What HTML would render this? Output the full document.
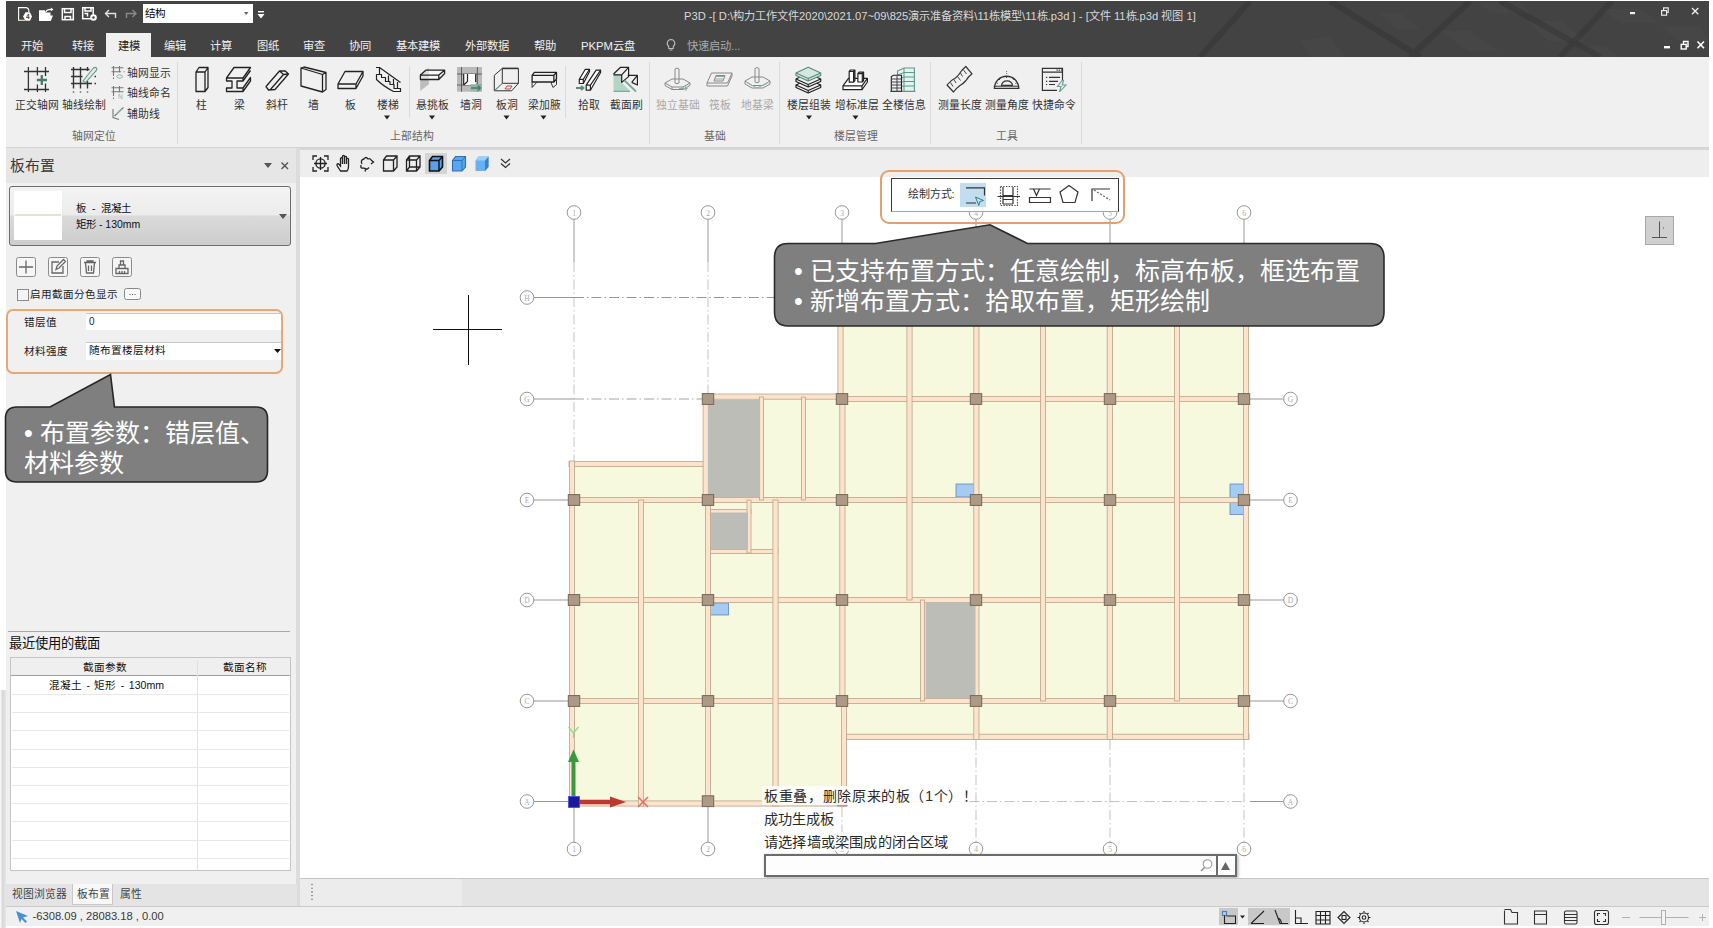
<!DOCTYPE html>
<html lang="zh-CN"><head><meta charset="utf-8">
<style>
*{box-sizing:border-box;margin:0;padding:0}
html,body{width:1713px;height:928px;overflow:hidden;background:#fff;font-family:"Liberation Sans",sans-serif;position:relative}
.a{position:absolute}
.t{position:absolute;white-space:nowrap;line-height:1}
#hdr{left:6px;top:1px;width:1703px;height:56.5px;background:#434343}
#rib{left:6px;top:57px;width:1703px;height:91px;background:#f0f0f0;border-bottom:1px solid #d4d4d4}
.tab{color:#f0f0f0;font-size:11.3px;top:40.8px;font-weight:500}
.rl{font-size:10.8px;color:#333;top:99.5px}
.gl{font-size:10.8px;color:#666;top:131px}
.sep{position:absolute;top:62px;width:1px;height:82px;background:#dadada}
#lp{left:6px;top:148px;width:290px;height:758px;background:#f0f0f0}
#cv{left:300px;top:177px;width:1409px;height:701px;background:#fff}
</style></head><body>
<div id="hdr" class="a"></div>
<svg class="a" style="left:1000px;top:1px" width="709" height="56">
 <g fill="#4a4a4a" opacity="0.55">
  <path d="M528 20 L562 20 L584 40 L548 40 Z"/><path d="M440 30 L470 30 L500 50 L468 50 Z"/>
  <path d="M600 8 L640 8 L660 22 L622 22 Z"/><path d="M660 25 L700 25 L709 40 L680 40 Z"/>
  <path d="M575 45 L605 45 L620 56 L590 56 Z"/><path d="M380 12 L400 12 L420 28 L396 28 Z"/>
  <path d="M300 40 L330 35 L345 56 L310 56 Z"/><path d="M480 2 L520 2 L530 12 L490 12 Z"/>
 </g>
 <g stroke="#333" stroke-width="6" opacity="0.45">
  <path d="M410 56 L470 0"/><path d="M560 56 L612 0"/><path d="M200 56 L250 0"/><path d="M500 0 L600 56"/><path d="M330 0 L420 56"/>
 </g>
</svg>
<!-- quick access -->
<svg class="a" style="left:0;top:0" width="300" height="30">
 <path d="M25 20.2 H18.6 V7.6 H26.5 Q28.5 8 28.8 10 V12" fill="none" stroke="#fff" stroke-width="1.1"/>
 <path d="M25.5 12.2 H30 L32 16.4 L30 20.8 H25.5 L23 16.4 Z" fill="#fff"/>
 <text x="27.8" y="19.3" font-size="6.5" fill="#404040" text-anchor="middle" font-family="Liberation Sans" font-weight="bold">4</text>
 <path d="M39 10.2 H44.8 L45.8 12.5 H50.5 V15.5 H53 L50.8 21 H39 Z" fill="#fff"/>
 <path d="M46 11.8 Q46.5 9.3 51.5 9.3" fill="none" stroke="#fff" stroke-width="1.3"/>
 <path d="M50.8 7.6 L53.5 9.4 L50.8 11.2 Z" fill="#fff"/>
<g fill="none" stroke="#fff" stroke-width="1.5">
  <rect x="62.3" y="8.7" width="11" height="11"/>
  <path d="M64.5 9 V12.5 H71 V9 M65 19.5 V16.5 H70.5 V19.5"/>
  <rect x="82.7" y="7.7" width="10.5" height="11"/>
  <path d="M85 8 V11 H91 V8 M84.5 13.5 H87.5 V16.5"/>
 </g>
 <circle cx="93.5" cy="17.5" r="3.3" fill="#fff"/><circle cx="93.5" cy="17.5" r="1.2" fill="#404040"/>
 <g fill="none" stroke="#e0e0e0" stroke-width="1.4">
  <path d="M109 10 L105.5 13.5 L109 17 M106 13.5 H115.5 V18"/>
 </g>
 <g fill="none" stroke="#8a8a8a" stroke-width="1.4">
  <path d="M132.5 10 L136 13.5 L132.5 17 M135.5 13.5 H126.5 V18"/>
 </g>
</svg>
<div class="a" style="left:143px;top:4px;width:110px;height:19px;background:#fff"></div>
<div class="t" style="left:144.5px;top:8px;font-size:10.5px;color:#000">结构</div>
<svg class="a" style="left:243px;top:11px" width="8" height="6"><path d="M1 1 L5.5 1 L3.25 4 Z" fill="#666"/></svg>
<svg class="a" style="left:256.5px;top:11px" width="8" height="10"><rect x="1" y="0" width="6" height="1.4" fill="#fff"/><path d="M0.5 3 L7.5 3 L4 7.5 Z" fill="#fff"/></svg>
<div class="t" style="left:684px;top:10.5px;font-size:11.2px;color:#d8d8d8;letter-spacing:0">P3D -[ D:\构力工作文件2020\2021.07~09\825演示准备资料\11栋模型\11栋.p3d ] - [文件 11栋.p3d 视图 1]</div>
<svg class="a" style="left:1620px;top:0" width="93" height="58">
 <rect x="10" y="12" width="5" height="2.2" fill="#f0f0f0"/>
 <g fill="none" stroke="#e8e8e8" stroke-width="1.2"><rect x="41.6" y="10.6" width="5" height="4.6"/><path d="M43.6 10.6 V7.8 H48.2 V12.5 H46.6"/></g>
 <path d="M72 8 L78.3 14.2 M78.3 8 L72 14.2" stroke="#f0f0f0" stroke-width="1.3"/>
 <rect x="44" y="46" width="6" height="2.4" fill="#fff"/>
 <g fill="none" stroke="#fff" stroke-width="1.4"><rect x="61.2" y="44.4" width="5" height="4.6"/><path d="M63.5 44.4 V41.5 H68 V46.5 H66.2"/></g>
 <path d="M77.5 41.5 L84 48.3 M84 41.5 L77.5 48.3" stroke="#fff" stroke-width="1.6"/>
</svg>
<!-- tabs -->
<div class="a" style="left:106px;top:33px;width:45px;height:25px;background:#f0f0f0"></div>
<div class="t tab" style="left:21px">开始</div>
<div class="t tab" style="left:71.5px">转接</div>
<div class="t tab" style="left:118px;color:#222">建模</div>
<div class="t tab" style="left:163.5px">编辑</div>
<div class="t tab" style="left:210px">计算</div>
<div class="t tab" style="left:257px">图纸</div>
<div class="t tab" style="left:303px">审查</div>
<div class="t tab" style="left:349px">协同</div>
<div class="t tab" style="left:396px">基本建模</div>
<div class="t tab" style="left:465px">外部数据</div>
<div class="t tab" style="left:534px">帮助</div>
<div class="t tab" style="left:581px">PKPM云盘</div>
<svg class="a" style="left:665px;top:38px" width="12" height="14"><path d="M6 1.5 A3.8 3.8 0 0 1 8.3 8.3 V10.5 H3.7 V8.3 A3.8 3.8 0 0 1 6 1.5 Z M4.5 12 H7.5" fill="none" stroke="#bbb" stroke-width="1.1"/></svg>
<div class="t tab" style="left:687px;color:#aaa">快速启动...</div>
<div id="rib" class="a"></div>
<div class="sep" style="left:177px"></div>
<div class="sep" style="left:409px;top:66px;height:52px"></div>
<div class="sep" style="left:565px;top:66px;height:52px"></div>
<div class="sep" style="left:649px"></div>
<div class="sep" style="left:779px"></div>
<div class="sep" style="left:930px"></div>
<div class="sep" style="left:1081px"></div>
<div class="t rl" style="left:15px">正交轴网</div>
<div class="t rl" style="left:62px">轴线绘制</div>
<div class="t rl" style="left:127px;top:67.5px">轴网显示</div>
<div class="t rl" style="left:127px;top:88px">轴线命名</div>
<div class="t rl" style="left:127px;top:108.5px">辅助线</div>
<div class="t gl" style="left:71.5px">轴网定位</div>
<div class="t rl" style="left:196px">柱</div>
<div class="t rl" style="left:233.5px">梁</div>
<div class="t rl" style="left:265.5px">斜杆</div>
<div class="t rl" style="left:308px">墙</div>
<div class="t rl" style="left:345px">板</div>
<div class="t rl" style="left:376.5px">楼梯</div>
<div class="t rl" style="left:416px">悬挑板</div>
<div class="t rl" style="left:459.5px">墙洞</div>
<div class="t rl" style="left:496px">板洞</div>
<div class="t rl" style="left:528px">梁加腋</div>
<div class="t rl" style="left:577.5px">拾取</div>
<div class="t rl" style="left:610px">截面刷</div>
<div class="t gl" style="left:390px">上部结构</div>
<div class="t rl" style="left:655.5px;color:#a8a8a8">独立基础</div>
<div class="t rl" style="left:709px;color:#a8a8a8">筏板</div>
<div class="t rl" style="left:741px;color:#a8a8a8">地基梁</div>
<div class="t gl" style="left:704px">基础</div>
<div class="t rl" style="left:787px">楼层组装</div>
<div class="t rl" style="left:834.5px">增标准层</div>
<div class="t rl" style="left:882px">全楼信息</div>
<div class="t gl" style="left:834px">楼层管理</div>
<div class="t rl" style="left:938px">测量长度</div>
<div class="t rl" style="left:985px">测量角度</div>
<div class="t rl" style="left:1032px">快捷命令</div>
<div class="t gl" style="left:996px">工具</div>
<svg class="a" style="left:0;top:0" width="1100" height="148">
<g fill="#222">
 <path d="M384 115.5 h6 l-3 4z"/><path d="M429 115.5 h6 l-3 4z"/><path d="M503.5 115.5 h6 l-3 4z"/><path d="M540.5 115.5 h6 l-3 4z"/>
 <path d="M806 115.5 h6 l-3 4z"/><path d="M852.5 115.5 h6 l-3 4z"/>
</g>
<!-- 正交轴网 -->
<g stroke="#333" stroke-width="1.3" fill="none">
 <path d="M24 71.5 H49 M24 89.5 H49 M28.4 67 V92 M37.4 67 V75.5 M37.4 84.5 V92 M45.5 67 V76 M45.5 83.5 V92"/>
</g>
<path d="M41.8 75 V85 M36.8 80 H47" stroke="#4a7a6e" stroke-width="2.3"/>
<!-- 轴线绘制 -->
<g stroke="#333" stroke-width="1.4" fill="none">
 <path d="M71 69.5 H89.5 M71 76.5 H82.5 M71 83.5 H92 M73.5 67 V88.5 M80.5 67 V88.5 M87.5 67 V71 M87.5 81 V88.5"/>
 <path d="M73.5 91.5 V92.5 M80.5 91.5 V92.5 M87.5 91.5 V92.5 M94.5 76.5 H96 M94.5 83.5 H96" stroke-width="1.5"/>
</g>
<path d="M83 81 L93 68.5 Q95 66.5 96.5 68 Q97.5 69.5 95.5 71.5 L85.5 82.5 Z" fill="#e2ede9" stroke="#6a9a8e" stroke-width="1.1"/>
<!-- small icons -->
<g stroke="#777" stroke-width="1.1" fill="none">
 <path d="M111.5 67.8 H123.5 M111.5 71.8 H121 M113.5 66 V76 M119.5 66 V72.5" />
 <path d="M113.5 77.5 V79 M123.5 71.8 H124.5" />
 <path d="M111.5 87.8 H123.5 M111.5 91.8 H123.5 M113.5 86 V96 M119.5 86 V92.5" />
 <path d="M113.5 97.5 V99" />
 <path d="M113 109 V117.5 L119 119.5 M114.5 116 L123.5 107.5"/>
</g>
<path d="M116.5 76.5 Q119.5 73 123 76.5 Q119.5 80 116.5 76.5 Z" fill="none" stroke="#8ab5aa" stroke-width="1"/>
<text x="118" y="99" font-size="6.5" fill="#8ab0a6" font-family="Liberation Sans">N</text>
<path d="M116.5 114 L122 108.5" stroke="#8ab5aa" stroke-width="1.6"/>
<!-- 柱 -->
<g stroke="#222" stroke-width="1.3" fill="none" stroke-linejoin="round">
 <path d="M196 72 L199 67.5 H208 V87.5 L205 91.5 H196 Z M196 72 H205 V91.5 M205 72 L208 67.5"/>
<!-- 梁 -->
 <path d="M226.5 78 L234 67.5 H250.5 L243 78 Z M226.5 78 V81 H232 V88 H226.5 V91.5 H243 V88 H237 V81 H243 V78 M243 81 L250.5 70.5 M243 91.5 L250.5 81 V77.5 L243 88"/>
<!-- 斜杆 -->
 <path d="M266 86.5 L279.5 71 L285 70.8 L288.5 74 L275 89.5 L268.5 90 Z M279.5 71 L283.5 74.5 L270 90 M283.5 74.5 L288.5 74"/>
<!-- 墙 -->
 <path d="M301 68 L322.5 74.5 L326 72.5 V89.5 L322.5 92 L301 86 Z M301 68 L304 67 L326 72.5 M322.5 74.5 V92"/>
<!-- 板 -->
 <path d="M338 84 L345 71.5 H363 L356 84 Z M338 84 V88.5 H356 L363 76 V71.5 M356 84 V88.5"/>
<!-- 楼梯 -->
 <path d="M376 67.5 H379.5 L400.5 82.5 M379.5 67.5 V74 M376.5 74.5 H381.5 V77.5 H385.5 V81.5 H390 V84.5 H394 V88.5 H400.5 V91.5 H393.5 Q383 86 376.5 79.5 Z M388.5 75.5 V81.5 M393.5 79 V84.5 M397.5 82 V88.5" stroke-width="1.2"/>
<!-- 悬挑板 -->
</g>
<path d="M420.2 75.3 L428.9 67.8 V84.2 L420.2 91 Z" fill="#bdbdbd"/>
<path d="M420.4 75.1 L425.8 70.2 H444.6 V73.5 L438.8 79.5 H420.4 Z" fill="#fff" fill-opacity="0.55"/>
<path d="M420.4 75.1 L425.8 70.2 H444.6 V73.5 L438.8 79.5 H420.4 Z M420.4 75.1 H438.8 V79.5 M438.8 75.1 L444.6 70.2" fill="none" stroke="#222" stroke-width="1.3" stroke-linejoin="round"/>
<!-- 墙洞 -->
<rect x="457" y="67" width="25" height="24.7" fill="#bababa"/>
<g stroke="#555" stroke-width="0.9"><path d="M457 74 H482 M457 85 H482 M461.5 67 V91.7 M477.4 67 V91.7"/></g>
<rect x="463.7" y="74" width="12" height="11" fill="#fff"/>
<path d="M467.5 74 V81.5 L463.7 85 M475.7 74 V82 M463.7 74 V85" fill="none" stroke="#222" stroke-width="1.2"/>
<rect x="470.5" y="84" width="11.5" height="7.5" fill="#8fb8aa" opacity="0.8"/>
<path d="M471 88 H480.5 M478 85.5 L480.5 88 L478 90.5" stroke="#4a7a6e" stroke-width="1.3" fill="none"/>
<!-- 板洞 -->
<g stroke="#333" stroke-width="1" fill="none" stroke-linejoin="round">
 <path d="M502.3 68.4 H518.4" stroke-width="1.6"/>
 <path d="M502.3 68.4 L494.3 75.3 V90.8 H511.7 L518.4 83.3 V68.4 M502.3 68.4 V83.3 H518.4"/>
</g>
<path d="M502.3 83.3 L494.8 90.3" stroke="#5a8a80" stroke-width="1.1"/>
<path d="M505 89 L507 86 H512 L510 89 Z" fill="none" stroke="#c04a4a" stroke-width="1"/>
<!-- 梁加腋 -->
<g stroke="#222" stroke-width="1.3" fill="none" stroke-linejoin="round">
 <path d="M532.1 75.3 L534.4 72.4 H556.5 V79 L553.9 82 H532.1 Z M532.1 75.3 H553.9 V82 M553.9 75.3 L556.5 72.4"/>
</g>
<g stroke="#333" stroke-width="1" fill="none">
 <path d="M532.1 82 V87.5 L537 82 M550.8 82 L553 87.5 L556.5 84.5 V79"/>
</g>
<!-- 拾取 -->
<g stroke="#222" stroke-width="1.2" fill="#fff" stroke-linejoin="round">
 <path d="M579.3 79.3 L585.3 69.3 H589.5 V71.5 L583.3 83.5 H579.3 Z"/>
 <path d="M579.3 79.3 H583.3 V83.5 M583.3 79.3 L589.5 69.3" fill="none"/>
 <path d="M586.2 85.1 L596.2 70.2 H600.6 V72.5 L590.4 90.2 H586.2 Z"/>
 <path d="M586.2 85.1 H590.4 V90.2 M590.4 85.1 L600.6 70.2" fill="none"/>
</g>
<path d="M576 88 H583 M581 86 L583.5 88 L581 90" stroke="#5a8a80" stroke-width="1.8" fill="none"/>
<!-- 截面刷 -->
<path d="M613.5 74 V91.3 H630.5 L621.7 82.4 V74.9 Z" fill="#b4d4c8"/>
<g stroke="#222" stroke-width="1.2" fill="none" stroke-linejoin="round">
 <path d="M613.5 74 L620.6 67.3 H628.6 L621.7 74.9 H613.5 M628.6 67.3 V76.6 L621.7 82.4 V74.9"/>
 <path d="M627.7 75.3 H637.4 V85 L631.7 82.4 M637.4 75.3 L631.7 82.4"/>
</g>
<path d="M624.5 80.5 L636 91.5" stroke="#7aa89a" stroke-width="1.8"/>
<path d="M613.5 91.3 H630" stroke="#6a9a8e" stroke-width="1"/>
<!-- 独立基础 -->
<g stroke="#888" stroke-width="1" fill="none" stroke-linejoin="round">
 <path d="M665 83 L672 79 H683 L690 83 L683 87 H672 Z M665 83 V85.5 L672 89.5 H683 L690 85.5 V83 M672 87 V89.5 M683 87 V89.5"/>
 <path d="M675 69 Q677 67 679 69 V83 Q677 84.5 675 83 Z"/>
</g>
<path d="M679 88.5 H687 M685 86.5 L687 88.5 L685 90.5" stroke="#8ab0a6" stroke-width="1.2" fill="none"/>
<!-- 筏板 -->
<g stroke="#888" stroke-width="1" fill="none">
 <path d="M707 83 L711.5 73 H732 L727.5 83 Z M707 83 V86 H727.5 L732 76 V73 M714 81 L716 75.5 H725 L723 81 Z"/>
</g>
<path d="M716 76.5 H724 M715 79 H723" stroke="#8ab0a6" stroke-width="1"/>
<!-- 地基梁 -->
<g stroke="#888" stroke-width="1" fill="none" stroke-linejoin="round">
 <path d="M745 81 L752 77 H763 L770 81 L763 85.5 H752 Z M745 81 V84 L752 88 H763 L770 84 V81"/>
 <path d="M755 68.5 Q757 66.5 759 68.5 V82 Q757 83.5 755 82 Z"/>
</g>
<path d="M747 82.5 L757 88 L768 82.5" stroke="#8ab0a6" stroke-width="1" fill="none"/>
<!-- 楼层组装 -->
<g stroke="#222" stroke-width="1.2" stroke-linejoin="round" fill="#f0f0f0">
 <path d="M796 85 L808.2 79.3 L820.7 85 V87.5 L808.2 93 L796 87.5 Z"/>
 <path d="M796 85 L808.2 90.5 L820.7 85 M808.2 90.5 V93" fill="none"/>
 <path d="M796 79 L808.2 73.3 L820.7 79 V81.5 L808.2 87 L796 81.5 Z"/>
 <path d="M796 79 L808.2 84.5 L820.7 79 M808.2 84.5 V87" fill="none"/>
</g>
<g stroke="#5a8a80" stroke-width="1.2" stroke-linejoin="round">
 <path d="M796 73 L808.2 67.3 L820.7 73 V75.5 L808.2 81 L796 75.5 Z" fill="#d4e8e0"/>
 <path d="M796 73 L808.2 78.5 L820.7 73 M808.2 78.5 V81" fill="none"/>
</g>
<!-- 增标准层 -->
<g stroke="#222" stroke-width="1.2" fill="#fff" stroke-linejoin="round">
 <path d="M843 85.9 L848.5 78.3 H867.4 V82 L862 89.7 H843 Z"/>
 <path d="M843 85.9 H862 V89.7 M862 85.9 L867.4 78.3" fill="none"/>
 <path d="M849.2 82.1 V71.5 L850.5 70 H854.9 V80.5 L853.6 82.1 Z M849.2 71.5 H853.6 V82.1 M853.6 71.5 L854.9 70"/>
 <path d="M857.9 82 V73.7 L859.2 72.2 H863.6 V80.5 L862.3 82 Z M857.9 73.7 H862.3 V82 M862.3 73.7 L863.6 72.2"/>
</g>
<!-- 全楼信息 -->
<g stroke="#5a9a8a" stroke-width="1.1" fill="#e6f2ee">
 <path d="M897.5 91.2 V71 L904 68 H914.4 V91.2 Z"/>
</g>
<g stroke="#5a9a8a" stroke-width="1" fill="none">
 <path d="M904 68 V91.2 M897.5 75 L904 72.5 H914.4 M897.5 79 L904 77 H914.4 M897.5 83 L904 81.5 H914.4 M897.5 87 L904 86 H914.4 M890 91.5 H915.5"/>
</g>
<g stroke="#222" stroke-width="1.1" fill="#f0f0f0">
 <path d="M891.3 91.2 V76.5 L893.5 75.3 H901.5 V91.2 Z"/>
</g>
<path d="M892 79 H901 M892 82 H901 M892 85 H901 M892 88 H901 M897 76 V91" stroke="#333" stroke-width="0.9"/>
<!-- 测量长度 -->
<g stroke="#333" stroke-width="1.2" fill="none" stroke-linejoin="round">
 <path d="M947 85 Q951 80 955.5 78 Q959 75 961 71.5 Q963 69 965.8 66.5 L972 73.8 Q968 77 966 80.5 Q963.5 83.5 960 85.5 Q956.5 88 953.5 92 Z"/>
 <path d="M950.5 82.5 L953 86.5 M954 79.5 L956 83 M957.5 76.5 L960.5 80.5 M960.5 73 L962.5 76.5 M963.5 70 L966.5 74" stroke-width="0.9"/>
</g>
<!-- 测量角度 -->
<g stroke="#333" fill="none">
 <path d="M994.4 88.4 A12.2 12.2 0 0 1 1018.8 88.4 Z" stroke-width="1.3"/>
 <path d="M994.8 86.2 H1018.4" stroke-width="1"/>
 <path d="M1001.5 85.4 A5.5 4.5 0 0 1 1012.5 85.4 Z" stroke-width="1.2"/>
 <path d="M1006.6 76.5 V78 M999 79 L1000 80 M1014.2 79 L1013.2 80 M996.5 83 L997.8 83.5 M1016.7 83 L1015.4 83.5" stroke-width="0.9"/>
 <path d="M1006.6 71 V71.8 M1006.6 73 V73.8" stroke-width="0.9"/>
</g>
<!-- 快捷命令 -->
<g stroke="#333" stroke-width="1.2" fill="none">
 <path d="M1057 90.4 H1042.4 V68.3 H1062.5 V80"/>
 <path d="M1042.4 72.2 H1062.5 M1049 77.4 H1060 M1049 81.3 H1058 M1049 84.5 H1055"/>
</g>
<path d="M1056.5 70.2 h1.2 M1058.7 70.2 h1.2 M1060.9 70.2 h1.2 M1046 77.4 h1.2 M1046 81.3 h1.2 M1046 84.5 h1.2" stroke="#333" stroke-width="1.2"/>
<path d="M1062 80.5 L1057.5 86.5 H1061 L1059.5 92 L1066 85 H1062.3 L1063.5 80.5 Z" fill="#e8f2ee" stroke="#6a9a8e" stroke-width="1.1"/>
</svg>
<div id="lp" class="a"></div>
<div class="a" style="left:0;top:690px;width:6px;height:238px;background:linear-gradient(90deg,#fff 0,#d8d8d8 40%,#e6e6e6 100%)"></div>
<div class="a" style="left:6px;top:148px;width:291px;height:35px;background:#e6e6e6"></div>
<div class="a" style="left:296px;top:148px;width:4px;height:758px;background:#dcdcdc"></div>
<div class="t" style="left:10px;top:159px;font-size:14.8px;color:#3a3a3a">板布置</div>
<svg class="a" style="left:262px;top:160px" width="30" height="12"><path d="M2 3 H10 L6 8 Z" fill="#555"/><path d="M19.5 2.5 L26 9 M26 2.5 L19.5 9" stroke="#555" stroke-width="1.4"/></svg>
<div class="a" style="left:9px;top:186px;width:282px;height:60px;border:1px solid #6e6e6e;border-radius:3px;background:linear-gradient(180deg,#f3f3f3 0%,#ececec 48%,#dadada 50%,#cdcdcd 100%)"></div>
<div class="a" style="left:14px;top:191px;width:48px;height:49px;background:#fff"></div>
<div class="a" style="left:15px;top:214px;width:46px;height:2px;background:#e4e4cc"></div>
<div class="t" style="left:76px;top:203px;font-size:10.5px;color:#111;word-spacing:3px">板 - 混凝土</div>
<div class="t" style="left:76px;top:218.5px;font-size:10.5px;color:#111">矩形 - 130mm</div>
<svg class="a" style="left:278px;top:213px" width="10" height="8"><path d="M1 1 H9 L5 6 Z" fill="#555"/></svg>
<svg class="a" style="left:0;top:250px" width="150" height="60">
 <g fill="#f6f6f6" stroke="#8a8a8a" stroke-width="1"><rect x="16.5" y="7.5" width="19" height="19" rx="2"/><rect x="48.5" y="7.5" width="19" height="19" rx="2"/><rect x="80.5" y="7.5" width="19" height="19" rx="2"/><rect x="112.5" y="7.5" width="19" height="19" rx="2"/></g>
 <g stroke="#666" stroke-width="1.3" fill="none">
  <path d="M26 10.5 V23.5 M19 17 H33"/>
  <path d="M59 12 H52 V23 H63 V16 M56 19.5 L57 16 L63.5 9.5 L65.5 11.5 L59 18 Z"/>
  <path d="M84 12.5 H96 M87 12.5 V11 H93 V12.5 M85.5 13 L86.5 23 H93.5 L94.5 13 M88.5 15.5 V21 M91.5 15.5 V21"/>
  <path d="M116 18.5 H128 V23.5 H116 Z M119 18.5 V15 H125 V18.5 M120.5 15 V11 H123.5 V15 M119.5 21 V23.5 M122 21 V23.5 M124.5 21 V23.5"/>
 </g>
 <rect x="17.5" y="39.5" width="11" height="11" fill="#f4f4f4" stroke="#8a8a8a"/>
 <rect x="124.5" y="38.5" width="16" height="11" rx="2" fill="#f8f8f8" stroke="#888"/>
 <path d="M129.5 44.5 h1 M132 44.5 h1 M134.5 44.5 h1" stroke="#555"/>
</svg>
<div class="t" style="left:30px;top:289px;font-size:10.6px;color:#222">启用截面分色显示</div>
<div class="a" style="left:6px;top:309px;width:277px;height:65px;border:2px solid #e8a874;border-radius:7px"></div>
<div class="t" style="left:24px;top:316.5px;font-size:10.6px;color:#222">错层值</div>
<div class="a" style="left:86px;top:313px;width:195px;height:17px;background:#fff;border-top:1px solid #c8c8c8"></div>
<div class="t" style="left:89px;top:316.5px;font-size:10px;color:#222">0</div>
<div class="t" style="left:24px;top:345.5px;font-size:10.6px;color:#222">材料强度</div>
<div class="a" style="left:86px;top:342px;width:195px;height:18px;background:#fff;border-top:1px solid #c8c8c8"></div>
<div class="t" style="left:89px;top:345px;font-size:10.6px;color:#111">随布置楼层材料</div>
<svg class="a" style="left:273px;top:348px" width="10" height="6"><path d="M1 1 H8 L4.5 5 Z" fill="#111"/></svg>
<svg class="a" style="left:0;top:370px" width="280" height="120">
 <path d="M17 37 H50 L110.5 4.5 L114.5 37 H256 Q267.5 37 267.5 48.5 V100.5 Q267.5 112 256 112 H17 Q5.5 112 5.5 100.5 V48.5 Q5.5 37 17 37 Z" fill="#7f7f7f" stroke="#262626" stroke-width="1.6"/>
</svg>
<div class="t" style="left:24px;top:417.5px;font-size:25px;color:#fff;line-height:30px">• 布置参数：错层值、<br>材料参数</div>
<div class="a" style="left:8px;top:631px;width:282px;height:1px;background:#a8a8a8"></div>
<div class="t" style="left:9px;top:637px;font-size:13.3px;color:#111">最近使用的截面</div>
<div class="a" style="left:10px;top:657px;width:281px;height:214px;background:#fff;border:1px solid #c4c4c4"></div>
<div class="a" style="left:11px;top:658px;width:279px;height:18px;background:#efefef;border-bottom:1px solid #a0a0a0"></div>
<div class="a" style="left:197px;top:660px;width:1px;height:210px;background:#e0e0e0"></div>
<div class="t" style="left:83px;top:661.5px;font-size:10.6px;color:#111">截面参数</div>
<div class="t" style="left:223px;top:661.5px;font-size:10.6px;color:#111">截面名称</div>
<div class="t" style="left:49px;top:679.5px;font-size:10.6px;color:#111;word-spacing:1.5px">混凝土 - 矩形 - 130mm</div>
<div class="a" style="left:12px;top:694px;width:277px;height:180px;background:repeating-linear-gradient(180deg,#e8e8e8 0,#e8e8e8 1px,transparent 1px,transparent 18.2px)"></div>
<div class="a" style="left:6px;top:884px;width:291px;height:22px;background:#e4e4e4"></div>
<div class="a" style="left:72px;top:884px;width:41px;height:21px;background:#f8f8f8;border:1px solid #c8c8c8;border-top:none"></div>
<div class="t" style="left:12px;top:889px;font-size:10.8px;color:#444">视图浏览器</div>
<div class="t" style="left:76.5px;top:889px;font-size:10.8px;color:#444">板布置</div>
<div class="t" style="left:120px;top:889px;font-size:10.8px;color:#444">属性</div>
<div class="a" style="left:6px;top:905.5px;width:1703px;height:20.5px;background:#f0f0f0;border-top:1px solid #cacaca"></div>
<svg class="a" style="left:14px;top:909px" width="16" height="16"><path d="M2 2 L14 7 L9 8.5 L13 12.5 L11.5 14 L7.5 10 L6 14 Z" fill="#4a90d0"/></svg>
<div class="t" style="left:32.5px;top:910.5px;font-size:11.2px;color:#3a3a3a">-6308.09 , 28083.18 , 0.00</div>
<div id="cv" class="a"></div>
<div class="a" style="left:300px;top:148px;width:1409px;height:2px;background:#d6d6d6"></div>
<div class="a" style="left:300px;top:150px;width:1409px;height:27px;background:#eeeeee"></div>
<div class="a" style="left:425px;top:153px;width:22px;height:21px;background:#d4d4d4"></div>
<svg class="a" style="left:300px;top:148px" width="220" height="30">
 <g stroke="#222" stroke-width="1.3" fill="none">
  <path d="M13 12 V8 H17 M24 8 H28 V12 M28 19 V23 H24 M17 23 H13 V19"/>
  <circle cx="20.5" cy="15.5" r="4.6"/><path d="M20.5 9 V22 M14 15.5 H27"/>
  <path d="M40.5 23 L37 17.5 Q36.5 15.5 38.5 15.8 L40.5 18 V10.5 Q41.5 8.8 42.5 10.5 V16 V8.2 Q43.5 6.6 44.5 8.2 V16 V9 Q45.5 7.6 46.5 9 V16 V11 Q47.5 9.8 48.5 11 V18.5 Q48.5 21.5 47 23 Z"/>
  <path d="M364 0" />
  <path d="M62 16 Q60 12 64 11 Q66 8 68 11 Q70 10 71 12 M71 12 L73.5 14 L71 16 M69 19.5 Q66 23 64 20 Q60 21 61 17 M66 20 L65 23.5"/>
  <path d="M83.5 12 L86.5 8 H97 V19 L93.5 23 H83.5 Z M83.5 12 H93.5 V23 M93.5 12 L97 8"/>
  <path d="M106.5 12 L109.5 8 H120 V19 L116.5 23 H106.5 Z M106.5 12 H116.5 V23 M116.5 12 L120 8 M109.5 8 V19 H120 M109.5 19 L106.5 23"/>
 </g>
 <path d="M129.5 12.5 L132.5 8.5 H142.5 V19 L139 23 H129.5 Z" fill="#5aa0e8" stroke="#111" stroke-width="1.6"/>
 <path d="M129.5 12.5 H139 V23 M139 12.5 L142.5 8.5" fill="none" stroke="#111" stroke-width="1.4"/>
 <path d="M152.5 12.5 L155.5 8.5 H165.5 V19 L162 23 H152.5 Z" fill="#5aa6ee" stroke="#2a70b8" stroke-width="1.1"/>
 <path d="M152.5 12.5 H162 V23 M162 12.5 L165.5 8.5" fill="none" stroke="#2a70b8" stroke-width="1"/>
 <path d="M175.5 12.5 L178.5 8.5 H188.5 V19 L185 23 H175.5 Z" fill="#6ab0f0"/>
 <path d="M185 12.5 V23 L188.5 19 V8.5 Z" fill="#3a80c8"/><path d="M175.5 12.5 L178.5 8.5 H188.5 L185 12.5 Z" fill="#9ccef8"/>
 <path d="M201 11 L205.5 15 L210 11 M201 15.5 L205.5 19.5 L210 15.5" stroke="#333" stroke-width="1.3" fill="none"/>
</svg>
<svg class="a" style="left:0;top:0" width="1713" height="928">
<circle cx="574" cy="212.5" r="6.8" fill="#fff" stroke="#8a8a8a" stroke-width="0.9"/>
<text x="574" y="215.5" font-size="7.5" fill="#aaa" text-anchor="middle" font-family="Liberation Serif">1</text>
<circle cx="708" cy="212.5" r="6.8" fill="#fff" stroke="#8a8a8a" stroke-width="0.9"/>
<text x="708" y="215.5" font-size="7.5" fill="#aaa" text-anchor="middle" font-family="Liberation Serif">2</text>
<circle cx="842" cy="212.5" r="6.8" fill="#fff" stroke="#8a8a8a" stroke-width="0.9"/>
<text x="842" y="215.5" font-size="7.5" fill="#aaa" text-anchor="middle" font-family="Liberation Serif">3</text>
<circle cx="976" cy="212.5" r="6.8" fill="#fff" stroke="#8a8a8a" stroke-width="0.9"/>
<text x="976" y="215.5" font-size="7.5" fill="#aaa" text-anchor="middle" font-family="Liberation Serif">4</text>
<circle cx="1110" cy="212.5" r="6.8" fill="#fff" stroke="#8a8a8a" stroke-width="0.9"/>
<text x="1110" y="215.5" font-size="7.5" fill="#aaa" text-anchor="middle" font-family="Liberation Serif">5</text>
<circle cx="1244" cy="212.5" r="6.8" fill="#fff" stroke="#8a8a8a" stroke-width="0.9"/>
<text x="1244" y="215.5" font-size="7.5" fill="#aaa" text-anchor="middle" font-family="Liberation Serif">6</text>
<path d="M574 219.5 L574 262" stroke="#8c8c8c" stroke-width="0.9" fill="none" />
<path d="M574 262 L574 461" stroke="#b4b4b4" stroke-width="0.8" fill="none" stroke-dasharray="10 3 1.5 3"/>
<path d="M708 219.5 L708 262" stroke="#8c8c8c" stroke-width="0.9" fill="none" />
<path d="M708 262 L708 394" stroke="#b4b4b4" stroke-width="0.8" fill="none" stroke-dasharray="10 3 1.5 3"/>
<path d="M842 219.5 L842 246" stroke="#8c8c8c" stroke-width="0.9" fill="none" />
<path d="M976 219.5 L976 246" stroke="#8c8c8c" stroke-width="0.9" fill="none" />
<path d="M1110 219.5 L1110 246" stroke="#8c8c8c" stroke-width="0.9" fill="none" />
<path d="M1244 219.5 L1244 246" stroke="#8c8c8c" stroke-width="0.9" fill="none" />
<circle cx="527" cy="297.5" r="6.8" fill="#fff" stroke="#8a8a8a" stroke-width="0.9"/>
<text x="527" y="300.5" font-size="7.5" fill="#aaa" text-anchor="middle" font-family="Liberation Serif">H</text>
<path d="M534 297.5 L574 297.5" stroke="#8c8c8c" stroke-width="0.9" fill="none" />
<path d="M574 297.5 L776 297.5" stroke="#8a8a8a" stroke-width="0.9" fill="none" stroke-dasharray="10 3 1.5 3"/>
<circle cx="527" cy="399" r="6.8" fill="#fff" stroke="#8a8a8a" stroke-width="0.9"/>
<text x="527" y="402" font-size="7.5" fill="#aaa" text-anchor="middle" font-family="Liberation Serif">G</text>
<path d="M534 399 L574 399" stroke="#8c8c8c" stroke-width="0.9" fill="none" />
<path d="M574 399 L703 399" stroke="#9a9a9a" stroke-width="0.9" fill="none" stroke-dasharray="10 3 1.5 3"/>
<circle cx="527" cy="500" r="6.8" fill="#fff" stroke="#8a8a8a" stroke-width="0.9"/>
<text x="527" y="503" font-size="7.5" fill="#aaa" text-anchor="middle" font-family="Liberation Serif">E</text>
<path d="M534 500 L568 500" stroke="#8c8c8c" stroke-width="0.9" fill="none" />
<circle cx="527" cy="600" r="6.8" fill="#fff" stroke="#8a8a8a" stroke-width="0.9"/>
<text x="527" y="603" font-size="7.5" fill="#aaa" text-anchor="middle" font-family="Liberation Serif">D</text>
<path d="M534 600 L568 600" stroke="#8c8c8c" stroke-width="0.9" fill="none" />
<circle cx="527" cy="701" r="6.8" fill="#fff" stroke="#8a8a8a" stroke-width="0.9"/>
<text x="527" y="704" font-size="7.5" fill="#aaa" text-anchor="middle" font-family="Liberation Serif">C</text>
<path d="M534 701 L568 701" stroke="#8c8c8c" stroke-width="0.9" fill="none" />
<circle cx="527" cy="801.5" r="6.8" fill="#fff" stroke="#8a8a8a" stroke-width="0.9"/>
<text x="527" y="804.5" font-size="7.5" fill="#aaa" text-anchor="middle" font-family="Liberation Serif">A</text>
<path d="M534 801.5 L568 801.5" stroke="#8c8c8c" stroke-width="0.9" fill="none" />
<circle cx="1290.5" cy="399" r="6.8" fill="#fff" stroke="#8a8a8a" stroke-width="0.9"/>
<text x="1290.5" y="402" font-size="7.5" fill="#aaa" text-anchor="middle" font-family="Liberation Serif">G</text>
<path d="M1250 399 L1283.5 399" stroke="#8c8c8c" stroke-width="0.9" fill="none" />
<circle cx="1290.5" cy="500" r="6.8" fill="#fff" stroke="#8a8a8a" stroke-width="0.9"/>
<text x="1290.5" y="503" font-size="7.5" fill="#aaa" text-anchor="middle" font-family="Liberation Serif">E</text>
<path d="M1250 500 L1283.5 500" stroke="#8c8c8c" stroke-width="0.9" fill="none" />
<circle cx="1290.5" cy="600" r="6.8" fill="#fff" stroke="#8a8a8a" stroke-width="0.9"/>
<text x="1290.5" y="603" font-size="7.5" fill="#aaa" text-anchor="middle" font-family="Liberation Serif">D</text>
<path d="M1250 600 L1283.5 600" stroke="#8c8c8c" stroke-width="0.9" fill="none" />
<circle cx="1290.5" cy="701" r="6.8" fill="#fff" stroke="#8a8a8a" stroke-width="0.9"/>
<text x="1290.5" y="704" font-size="7.5" fill="#aaa" text-anchor="middle" font-family="Liberation Serif">C</text>
<path d="M1250 701 L1283.5 701" stroke="#8c8c8c" stroke-width="0.9" fill="none" />
<circle cx="1290.5" cy="801.5" r="6.8" fill="#fff" stroke="#8a8a8a" stroke-width="0.9"/>
<text x="1290.5" y="804.5" font-size="7.5" fill="#aaa" text-anchor="middle" font-family="Liberation Serif">A</text>
<path d="M1250 801.5 L1283.5 801.5" stroke="#8c8c8c" stroke-width="0.9" fill="none" />
<path d="M574 807 L574 842" stroke="#8c8c8c" stroke-width="0.9" fill="none" />
<path d="M708 807 L708 842" stroke="#8c8c8c" stroke-width="0.9" fill="none" />
<path d="M976 740 L976 842" stroke="#b4b4b4" stroke-width="0.8" fill="none" stroke-dasharray="10 3 1.5 3"/>
<path d="M1110 740 L1110 842" stroke="#b4b4b4" stroke-width="0.8" fill="none" stroke-dasharray="10 3 1.5 3"/>
<path d="M1244 740 L1244 842" stroke="#b4b4b4" stroke-width="0.8" fill="none" stroke-dasharray="10 3 1.5 3"/>
<path d="M842 807 L842 842" stroke="#b4b4b4" stroke-width="0.8" fill="none" stroke-dasharray="10 3 1.5 3"/>
<path d="M847 801.5 L1244 801.5" stroke="#b4b4b4" stroke-width="0.8" fill="none" stroke-dasharray="10 3 1.5 3"/>
<circle cx="574" cy="849" r="6.8" fill="#fff" stroke="#8a8a8a" stroke-width="0.9"/>
<text x="574" y="852" font-size="7.5" fill="#aaa" text-anchor="middle" font-family="Liberation Serif">1</text>
<circle cx="708" cy="849" r="6.8" fill="#fff" stroke="#8a8a8a" stroke-width="0.9"/>
<text x="708" y="852" font-size="7.5" fill="#aaa" text-anchor="middle" font-family="Liberation Serif">2</text>
<circle cx="842" cy="849" r="6.8" fill="#fff" stroke="#8a8a8a" stroke-width="0.9"/>
<text x="842" y="852" font-size="7.5" fill="#aaa" text-anchor="middle" font-family="Liberation Serif">3</text>
<circle cx="976" cy="849" r="6.8" fill="#fff" stroke="#8a8a8a" stroke-width="0.9"/>
<text x="976" y="852" font-size="7.5" fill="#aaa" text-anchor="middle" font-family="Liberation Serif">4</text>
<circle cx="1110" cy="849" r="6.8" fill="#fff" stroke="#8a8a8a" stroke-width="0.9"/>
<text x="1110" y="852" font-size="7.5" fill="#aaa" text-anchor="middle" font-family="Liberation Serif">5</text>
<circle cx="1244" cy="849" r="6.8" fill="#fff" stroke="#8a8a8a" stroke-width="0.9"/>
<text x="1244" y="852" font-size="7.5" fill="#aaa" text-anchor="middle" font-family="Liberation Serif">6</text>
<path d="M840 300 H1249 V739.5 H846.5 V806 H569 V461 H703 V394 H840 Z" fill="#f6f9de"/>
<rect x="710.5" y="603" width="18" height="12" fill="#a4ccf2" stroke="#5a88c0" stroke-width="0.8"/>
<rect x="956" y="484" width="18.5" height="13" fill="#a4ccf2" stroke="#5a88c0" stroke-width="0.8"/>
<rect x="1230" y="484" width="13.5" height="30.5" fill="#a4ccf2" stroke="#5a88c0" stroke-width="0.8"/>
<rect x="703" y="394.00" width="139" height="5.2" fill="#fde3cb" stroke="#b9a58b" stroke-width="0.8"/>
<rect x="842" y="396.40" width="407" height="5.2" fill="#fde3cb" stroke="#b9a58b" stroke-width="0.8"/>
<rect x="569" y="461.40" width="139" height="5.2" fill="#fde3cb" stroke="#b9a58b" stroke-width="0.8"/>
<rect x="569" y="497.40" width="680" height="5.2" fill="#fde3cb" stroke="#b9a58b" stroke-width="0.8"/>
<rect x="706" y="509.50" width="45" height="4" fill="#fde3cb" stroke="#b9a58b" stroke-width="0.8"/>
<rect x="706" y="549.50" width="72" height="4" fill="#fde3cb" stroke="#b9a58b" stroke-width="0.8"/>
<rect x="569" y="597.40" width="680" height="5.2" fill="#fde3cb" stroke="#b9a58b" stroke-width="0.8"/>
<rect x="569" y="698.40" width="680" height="5.2" fill="#fde3cb" stroke="#b9a58b" stroke-width="0.8"/>
<rect x="842" y="734.20" width="407" height="5.2" fill="#fde3cb" stroke="#b9a58b" stroke-width="0.8"/>
<rect x="569" y="800.90" width="277.5" height="5.2" fill="#fde3cb" stroke="#b9a58b" stroke-width="0.8"/>
<rect x="569.40" y="461" width="5.2" height="345" fill="#fde3cb" stroke="#b9a58b" stroke-width="0.8"/>
<rect x="638.40" y="500" width="5.2" height="306" fill="#fde3cb" stroke="#b9a58b" stroke-width="0.8"/>
<rect x="703.10" y="394" width="5.2" height="106" fill="#fde3cb" stroke="#b9a58b" stroke-width="0.8"/>
<rect x="705.40" y="500" width="5.2" height="306" fill="#fde3cb" stroke="#b9a58b" stroke-width="0.8"/>
<rect x="747.00" y="500" width="4" height="53" fill="#fde3cb" stroke="#b9a58b" stroke-width="0.8"/>
<rect x="759.50" y="397" width="4" height="103" fill="#fde3cb" stroke="#b9a58b" stroke-width="0.8"/>
<rect x="772.90" y="500" width="5.2" height="306" fill="#fde3cb" stroke="#b9a58b" stroke-width="0.8"/>
<rect x="801.50" y="397" width="4" height="103" fill="#fde3cb" stroke="#b9a58b" stroke-width="0.8"/>
<rect x="837.90" y="300" width="5.2" height="99" fill="#fde3cb" stroke="#b9a58b" stroke-width="0.8"/>
<rect x="839.80" y="399" width="5.2" height="302" fill="#fde3cb" stroke="#b9a58b" stroke-width="0.8"/>
<rect x="841.40" y="701" width="5.2" height="105" fill="#fde3cb" stroke="#b9a58b" stroke-width="0.8"/>
<rect x="906.90" y="300" width="5.2" height="300" fill="#fde3cb" stroke="#b9a58b" stroke-width="0.8"/>
<rect x="920.60" y="600" width="4" height="101" fill="#fde3cb" stroke="#b9a58b" stroke-width="0.8"/>
<rect x="973.80" y="300" width="5.2" height="439.5" fill="#fde3cb" stroke="#b9a58b" stroke-width="0.8"/>
<rect x="1040.40" y="300" width="5.2" height="401" fill="#fde3cb" stroke="#b9a58b" stroke-width="0.8"/>
<rect x="1107.20" y="300" width="5.2" height="439.5" fill="#fde3cb" stroke="#b9a58b" stroke-width="0.8"/>
<rect x="1174.40" y="300" width="5.2" height="401" fill="#fde3cb" stroke="#b9a58b" stroke-width="0.8"/>
<rect x="1243.40" y="300" width="5.2" height="439.5" fill="#fde3cb" stroke="#b9a58b" stroke-width="0.8"/>
<rect x="708" y="399.5" width="52" height="97.5" fill="#bcbdb6"/>
<rect x="711" y="512.5" width="37" height="37" fill="#bcbdb6"/>
<rect x="925.5" y="602.5" width="50" height="95.5" fill="#bcbdb6"/>
<rect x="702.3" y="393.6" width="11.4" height="10.8" fill="#ac9a86" stroke="#766658" stroke-width="1"/>
<rect x="836.3" y="393.6" width="11.4" height="10.8" fill="#ac9a86" stroke="#766658" stroke-width="1"/>
<rect x="970.3" y="393.6" width="11.4" height="10.8" fill="#ac9a86" stroke="#766658" stroke-width="1"/>
<rect x="1104.3" y="393.6" width="11.4" height="10.8" fill="#ac9a86" stroke="#766658" stroke-width="1"/>
<rect x="1238.3" y="393.6" width="11.4" height="10.8" fill="#ac9a86" stroke="#766658" stroke-width="1"/>
<rect x="568.3" y="494.6" width="11.4" height="10.8" fill="#ac9a86" stroke="#766658" stroke-width="1"/>
<rect x="702.3" y="494.6" width="11.4" height="10.8" fill="#ac9a86" stroke="#766658" stroke-width="1"/>
<rect x="836.3" y="494.6" width="11.4" height="10.8" fill="#ac9a86" stroke="#766658" stroke-width="1"/>
<rect x="970.3" y="494.6" width="11.4" height="10.8" fill="#ac9a86" stroke="#766658" stroke-width="1"/>
<rect x="1104.3" y="494.6" width="11.4" height="10.8" fill="#ac9a86" stroke="#766658" stroke-width="1"/>
<rect x="1238.3" y="494.6" width="11.4" height="10.8" fill="#ac9a86" stroke="#766658" stroke-width="1"/>
<rect x="568.3" y="594.6" width="11.4" height="10.8" fill="#ac9a86" stroke="#766658" stroke-width="1"/>
<rect x="702.3" y="594.6" width="11.4" height="10.8" fill="#ac9a86" stroke="#766658" stroke-width="1"/>
<rect x="836.3" y="594.6" width="11.4" height="10.8" fill="#ac9a86" stroke="#766658" stroke-width="1"/>
<rect x="970.3" y="594.6" width="11.4" height="10.8" fill="#ac9a86" stroke="#766658" stroke-width="1"/>
<rect x="1104.3" y="594.6" width="11.4" height="10.8" fill="#ac9a86" stroke="#766658" stroke-width="1"/>
<rect x="1238.3" y="594.6" width="11.4" height="10.8" fill="#ac9a86" stroke="#766658" stroke-width="1"/>
<rect x="568.3" y="695.6" width="11.4" height="10.8" fill="#ac9a86" stroke="#766658" stroke-width="1"/>
<rect x="702.3" y="695.6" width="11.4" height="10.8" fill="#ac9a86" stroke="#766658" stroke-width="1"/>
<rect x="836.3" y="695.6" width="11.4" height="10.8" fill="#ac9a86" stroke="#766658" stroke-width="1"/>
<rect x="970.3" y="695.6" width="11.4" height="10.8" fill="#ac9a86" stroke="#766658" stroke-width="1"/>
<rect x="1104.3" y="695.6" width="11.4" height="10.8" fill="#ac9a86" stroke="#766658" stroke-width="1"/>
<rect x="1238.3" y="695.6" width="11.4" height="10.8" fill="#ac9a86" stroke="#766658" stroke-width="1"/>
<rect x="702.3" y="795.8" width="11.4" height="10.8" fill="#ac9a86" stroke="#766658" stroke-width="1"/>
<rect x="837" y="803.8" width="10.5" height="2.6" fill="#ac9a86"/>
<path d="M573.5 797 V759" stroke="#3a9a3a" stroke-width="4"/>
<path d="M568 762 L573.5 749.5 L579 762 Z" fill="#3a9a3a"/>
<path d="M568.5 727 L573.5 733 L578.5 727 M573.5 733 V738" stroke="#8ade8a" stroke-width="1.3" fill="none"/>
<path d="M579 802 H612" stroke="#b83a30" stroke-width="4.5"/>
<path d="M610 796.5 L626 802 L610 807.5 Z" fill="#b83a30"/>
<path d="M638 797 L648 807 M648 797 L638 807" stroke="#e86a6a" stroke-width="1.5"/>
<rect x="568.5" y="796.5" width="11" height="11" fill="#1a1a9a" stroke="#4a4ae0" stroke-width="0.8"/>
<path d="M433 329.5 H502 M468.5 295 V365" stroke="#111" stroke-width="1"/>
</svg>
<div class="a" style="left:1645px;top:216px;width:29px;height:29px;background:#d0d0d0;border:1px solid #a8a8a8"></div>
<svg class="a" style="left:1645px;top:216px" width="29" height="29"><path d="M7 21.5 H22 M14.5 21.5 V5.5" stroke="#555" stroke-width="1"/><circle cx="18.5" cy="12" r="0.7" fill="#666"/></svg>
<!-- messages -->
<div class="a" style="left:762px;top:786px;width:206px;height:19px;background:rgba(255,255,255,0.85)"></div>
<div class="a" style="left:762px;top:809px;width:76px;height:19px;background:rgba(255,255,255,0.85)"></div>
<div class="a" style="left:762px;top:832px;width:190px;height:19px;background:rgba(255,255,255,0.85)"></div>
<div class="t" style="left:764px;top:788.5px;font-size:14px;color:#2a2a2a;letter-spacing:0.65px">板重叠，删除原来的板（1个）！</div>
<div class="t" style="left:764px;top:811.5px;font-size:14.2px;color:#2a2a2a">成功生成板</div>
<div class="t" style="left:764px;top:835px;font-size:14.2px;color:#2a2a2a;letter-spacing:0.2px">请选择墙或梁围成的闭合区域</div>
<div class="a" style="left:764px;top:854px;width:473px;height:23px;background:#fdfdfd;border:2px solid #6c6c6c;box-shadow:1px 1px 3px rgba(0,0,0,0.35)"></div>
<div class="a" style="left:1216px;top:855px;width:2px;height:21px;background:#6c6c6c"></div>
<svg class="a" style="left:1198px;top:857px" width="38" height="18">
 <circle cx="9.5" cy="7" r="4.3" fill="none" stroke="#9a9a9a" stroke-width="1.1"/><path d="M6.5 10.5 L3 14" stroke="#888" stroke-width="1.3"/>
 <path d="M23 13 L27.5 5 L32 13 Z" fill="#666"/>
</svg>
<!-- bottom bars -->
<div class="a" style="left:300px;top:878px;width:1409px;height:28px;background:#e4e4e4;border-top:1px solid #c6c6c6"></div>
<div class="a" style="left:300px;top:879px;width:162px;height:27px;background:#ececec"></div>
<svg class="a" style="left:308px;top:882px" width="8" height="20"><g fill="#777"><circle cx="4" cy="2.5" r="0.8"/><circle cx="4" cy="6.2" r="0.8"/><circle cx="4" cy="9.9" r="0.8"/><circle cx="4" cy="13.6" r="0.8"/><circle cx="4" cy="17.2" r="0.8"/></g></svg>
<svg class="a" style="left:1210px;top:906px" width="503" height="22">
 <rect x="9" y="2" width="19" height="17" fill="#c8c8c8"/>
 <rect x="38" y="2" width="42" height="17" fill="#c8c8c8"/>
 <g fill="none" stroke="#222" stroke-width="1.1">
  <rect x="12.5" y="5.5" width="4" height="4" stroke="#4a80c0"/>
  <path d="M14.5 9.5 V17.5 H25.5 V10 H16.5"/>
  <path d="M41 17.5 L54 5 M41 17.5 H54"/>
  <path d="M65 4 L70 17.5 H78 M68 12 Q71 13 71.5 17.5" />
  <path d="M85.5 4 V17.5 H98 M85.5 12 H91 V17.5"/>
  <path d="M106 5.5 H120 V18 H106 Z M110.5 5.5 V18 M115.5 5.5 V18 M106 9.5 H120 M106 14 H120"/>
  <path d="M128 11.5 L134 5.5 L140 11.5 L134 17.5 Z"/><rect x="132" y="9.5" width="4" height="4"/>
  <circle cx="154" cy="11.5" r="4.5"/><circle cx="154" cy="11.5" r="1.8"/>
  <path d="M154 5 V6.5 M154 16.5 V18 M147.5 11.5 H149 M159 11.5 H160.5 M149.5 7 L150.5 8 M157.5 15 L158.5 16 M158.5 7 L157.5 8 M150.5 15 L149.5 16"/>
 </g>
 <path d="M30 9.5 h5 l-2.5 3z" fill="#222"/>
 <g fill="none" stroke="#333" stroke-width="1.1">
  <path d="M294.5 4.5 V18 H307.5 V6.5 H302 L300.5 3.5 H294.5"/>
  <path d="M324.5 5 H336.5 V18 H324.5 Z M324.5 8.5 H336.5"/>
  <rect x="354.5" y="5" width="12.5" height="13" rx="1.5"/><path d="M354.5 8.5 H367 M354.5 11.5 H367 M354.5 14.5 H367"/>
  <rect x="384.5" y="4.5" width="14" height="14" rx="2"/>
  <path d="M387.5 10 V7.5 H390 M393 7.5 H395.5 V10 M395.5 13 V15.5 H393 M390 15.5 H387.5 V13"/>
 </g>
 <path d="M412 11.5 H420 M429.5 11.5 H478.5 M489 11.5 H496 M492.5 8 V15" stroke="#b0b0b0" stroke-width="1"/>
 <rect x="451.5" y="4.5" width="4" height="14" fill="#f4f4f4" stroke="#b0b0b0"/>
</svg>
<!-- popup toolbar -->
<div class="a" style="left:880px;top:169.5px;width:244.5px;height:54px;border:2px solid #e3a070;border-radius:9px"></div>
<div class="a" style="left:891px;top:178px;width:227.5px;height:33.5px;background:#fff;border:1px solid #3a3a3a;border-bottom-color:#9aa"></div>
<div class="t" style="left:907.5px;top:188.5px;font-size:11px;color:#333">绘制方式:</div>
<div class="a" style="left:960px;top:183px;width:26px;height:24px;background:#c2dcf0"></div>
<svg class="a" style="left:950px;top:178px" width="170" height="34">
 <g fill="none" stroke="#333" stroke-width="1.2">
  <path d="M16 9.8 H34.5 V17.5 M16 25 H26"/>
 </g>
 <path d="M25.5 19 L33.5 22.5 L29.8 23.5 L28.8 27.5 Z" fill="#bfe6ea" stroke="#3a7a8a" stroke-width="1"/>
 <g fill="none" stroke="#333" stroke-width="1.2">
  <path d="M53 9 V26 M63 9 V26 M53 17.5 H63 M53 26 H63 M53 21.5 H63"/>
  <rect x="50.5" y="8.5" width="17" height="19" stroke-dasharray="1.5 1.2" stroke="#555"/>
  <path d="M47.5 18.5 H70" stroke-width="1"/>
  <path d="M79.5 11 H100.5 M79.5 19.5 H100.5 V24.5 H79.5 Z M83.5 11 L86.5 17.5 L89.5 11" />
  <path d="M119 7.5 L128 14 L125 24.5 H113 L110 14 Z"/>
  <path d="M142 23 V11 H160"/>
 </g>
 <path d="M144 12 L160 22" stroke="#666" stroke-width="1.2" stroke-dasharray="2 1.6" fill="none"/>
</svg>
<!-- big callout -->
<svg class="a" style="left:770px;top:220px" width="620" height="110">
 <path d="M18 23.5 H105.5 L220 4.8 L257.5 23.5 H600 Q614 23.5 614 37.5 V92 Q614 106 600 106 H18 Q4.5 106 4.5 92 V37.5 Q4.5 23.5 18 23.5 Z" fill="#7f7f7f" stroke="#2a2a2a" stroke-width="1.6"/>
</svg>
<div class="t" style="left:794px;top:256px;font-size:25px;color:#fff;line-height:30px">• 已支持布置方式：任意绘制，标高布板，框选布置<br>• 新增布置方式：拾取布置，矩形绘制</div>
</body></html>
